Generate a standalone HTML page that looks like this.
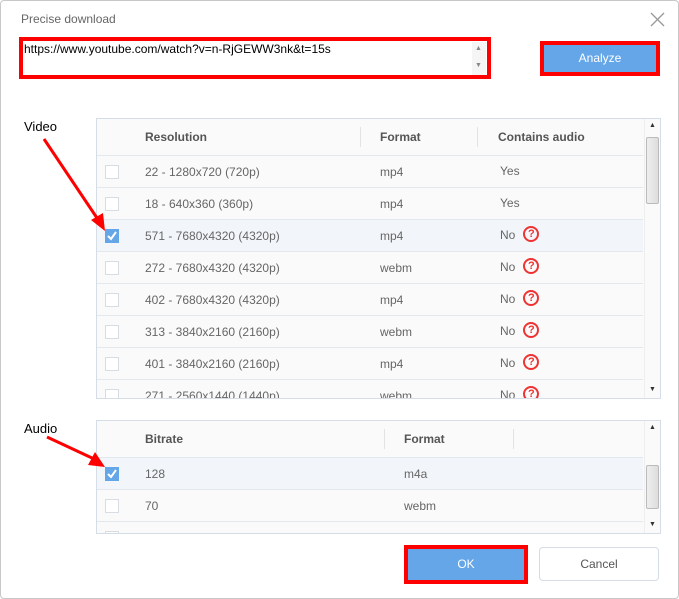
<!DOCTYPE html>
<html><head><meta charset="utf-8"><style>
*{margin:0;padding:0;box-sizing:border-box}
body{width:679px;height:599px;background:#fff;font-family:"Liberation Sans",sans-serif;position:relative;overflow:hidden}
.win{position:absolute;left:0;top:0;width:679px;height:599px;border:1px solid #c8c8c8;border-radius:4px}
.abs{position:absolute}
.tbl{position:absolute;border:1px solid #d5dde6;background:#fafafa;overflow:hidden}
.row{position:absolute;left:0;height:32px;border-top:1px solid #e3e8ee;width:546px}
.cb{position:absolute;left:8px;width:14px;height:14px;border:1px solid #d8dde3;background:#fff}
.cb.on{background:#64a6e8;border-color:#64a6e8}
.cell{position:absolute;font-size:12px;color:#666;top:9px}
.hd{position:absolute;font-size:12px;color:#555;font-weight:bold;top:11px}
.sep{position:absolute;width:1px;background:#e3e3e3;top:8px;height:20px}
.q{display:inline-block;width:16px;height:16px;border:2px solid #e33;border-radius:50%;color:#e33;font-size:11px;text-align:center;line-height:12px;font-weight:bold;vertical-align:middle;margin-left:8px;margin-top:-3px}
.sb{position:absolute;right:0;top:0;width:16px;bottom:0;background:#fafafa;border-left:1px solid #eee}
.thumb{position:absolute;left:1px;width:13px;background:linear-gradient(90deg,#eee,#ddd);border:1px solid #bbb;border-radius:2px}
</style></head><body>
<div class="win"></div>
<div class="abs" style="left:21px;top:12px;font-size:12px;color:#666">Precise download</div>
<svg class="abs" style="left:650px;top:12px" width="15" height="15"><path d="M1 1L14 14M14 1L1 14" stroke="#999" stroke-width="1.3"/></svg>

<div class="abs" style="left:19px;top:37px;width:472px;height:42px;border:4px solid #f00;background:#fff"></div>
<div class="abs" style="left:24px;top:42px;font-size:12px;color:#000">https://www.youtube.com/watch?v=n-RjGEWW3nk&amp;t=15s</div>
<div class="abs" style="left:472px;top:42px;width:14px;height:33px;background:#f5f5f5"></div>
<div class="abs" style="left:475px;top:45px;font-size:7px;color:#888">▲</div>
<div class="abs" style="left:475px;top:62px;font-size:7px;color:#888">▼</div>

<div class="abs" style="left:540px;top:41px;width:120px;height:35px;border:4px solid #f00;background:#64a6e8;color:#fff;font-size:12px;text-align:center;line-height:27px">Analyze</div>

<div class="abs" style="left:24px;top:119px;font-size:13px;color:#000">Video</div>
<div class="abs" style="left:24px;top:421px;font-size:13px;color:#000">Audio</div>

<div class="tbl" style="left:96px;top:118px;width:565px;height:281px">
 <div class="hd" style="left:48px">Resolution</div><div class="sep" style="left:263px"></div>
 <div class="hd" style="left:283px">Format</div><div class="sep" style="left:380px"></div>
 <div class="hd" style="left:401px">Contains audio</div>
 <div class="row" style="top:36px"><div class="cb" style="top:9px"></div><div class="cell" style="left:48px">22 - 1280x720 (720p)</div><div class="cell" style="left:283px">mp4</div><div class="cell" style="left:403px;top:8px">Yes</div></div>
 <div class="row" style="top:68px"><div class="cb" style="top:9px"></div><div class="cell" style="left:48px">18 - 640x360 (360p)</div><div class="cell" style="left:283px">mp4</div><div class="cell" style="left:403px;top:8px">Yes</div></div>
 <div class="row" style="top:100px;background:#f2f6fa"><div class="cb on" style="top:9px"><svg width="12" height="12" style="position:absolute;left:0;top:0"><path d="M2 6L5 9L10 2" stroke="#fff" stroke-width="2" fill="none"/></svg></div><div class="cell" style="left:48px">571 - 7680x4320 (4320p)</div><div class="cell" style="left:283px">mp4</div><div class="cell" style="left:403px;top:8px">No<span class="q">?</span></div></div>
 <div class="row" style="top:132px"><div class="cb" style="top:9px"></div><div class="cell" style="left:48px">272 - 7680x4320 (4320p)</div><div class="cell" style="left:283px">webm</div><div class="cell" style="left:403px;top:8px">No<span class="q">?</span></div></div>
 <div class="row" style="top:164px"><div class="cb" style="top:9px"></div><div class="cell" style="left:48px">402 - 7680x4320 (4320p)</div><div class="cell" style="left:283px">mp4</div><div class="cell" style="left:403px;top:8px">No<span class="q">?</span></div></div>
 <div class="row" style="top:196px"><div class="cb" style="top:9px"></div><div class="cell" style="left:48px">313 - 3840x2160 (2160p)</div><div class="cell" style="left:283px">webm</div><div class="cell" style="left:403px;top:8px">No<span class="q">?</span></div></div>
 <div class="row" style="top:228px"><div class="cb" style="top:9px"></div><div class="cell" style="left:48px">401 - 3840x2160 (2160p)</div><div class="cell" style="left:283px">mp4</div><div class="cell" style="left:403px;top:8px">No<span class="q">?</span></div></div>
 <div class="row" style="top:260px"><div class="cb" style="top:9px"></div><div class="cell" style="left:48px">271 - 2560x1440 (1440p)</div><div class="cell" style="left:283px">webm</div><div class="cell" style="left:403px;top:8px">No<span class="q">?</span></div></div>
 <div class="sb"><div class="abs" style="left:4px;top:3px;font-size:7px;color:#333">▲</div><div class="thumb" style="top:18px;height:67px"></div><div class="abs" style="left:4px;top:267px;font-size:7px;color:#333">▼</div></div>
</div>

<div class="tbl" style="left:96px;top:420px;width:565px;height:114px">
 <div class="hd" style="left:48px">Bitrate</div><div class="sep" style="left:287px"></div>
 <div class="hd" style="left:307px">Format</div><div class="sep" style="left:416px"></div>
 <div class="row" style="top:36px;background:#f2f6fa"><div class="cb on" style="top:9px"><svg width="12" height="12" style="position:absolute;left:0;top:0"><path d="M2 6L5 9L10 2" stroke="#fff" stroke-width="2" fill="none"/></svg></div><div class="cell" style="left:48px">128</div><div class="cell" style="left:307px">m4a</div></div>
 <div class="row" style="top:68px"><div class="cb" style="top:9px"></div><div class="cell" style="left:48px">70</div><div class="cell" style="left:307px">webm</div></div>
 <div class="row" style="top:100px"><div class="cb" style="top:9px"></div></div>
 <div class="sb"><div class="abs" style="left:4px;top:3px;font-size:7px;color:#333">▲</div><div class="thumb" style="top:44px;height:44px"></div><div class="abs" style="left:4px;top:100px;font-size:7px;color:#333">▼</div></div>
</div>

<svg class="abs" style="left:0;top:0" width="679" height="599">
 <path d="M44 139L97 218" stroke="#f00" stroke-width="3"/>
 <polygon points="105,231 91,220 103,213" fill="#f00"/>
 <path d="M47 437L92 458" stroke="#f00" stroke-width="3"/>
 <polygon points="105,467 88,465 95,452" fill="#f00"/>
</svg>

<div class="abs" style="left:404px;top:545px;width:124px;height:39px;border:4px solid #f00;background:#64a6e8;color:#fff;font-size:12px;text-align:center;line-height:31px">OK</div>
<div class="abs" style="left:539px;top:547px;width:120px;height:34px;border:1px solid #d5dde6;border-radius:4px;background:#fff;color:#555;font-size:12px;text-align:center;line-height:32px">Cancel</div>
</body></html>
